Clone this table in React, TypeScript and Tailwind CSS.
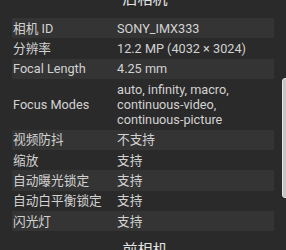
type Row = { label: string; value: string[] };

const BACK_CAMERA: Row[] = [
  { label: '相机 ID', value: ['SONY_IMX333'] },
  { label: '分辨率', value: ['12.2 MP (4032 × 3024)'] },
  { label: 'Focal Length', value: ['4.25 mm'] },
  { label: 'Focus Modes', value: ['auto, infinity, macro,', 'continuous-video,', 'continuous-picture'] },
  { label: '视频防抖', value: ['不支持'] },
  { label: '缩放', value: ['支持'] },
  { label: '自动曝光锁定', value: ['支持'] },
  { label: '自动白平衡锁定', value: ['支持'] },
  { label: '闪光灯', value: ['支持'] },
];

function SpecTable({ rows }: { rows: Row[] }) {
  return (
    <div className="flex flex-col">
      {rows.map((row, i) => (
        <div
          key={row.label}
          className={`flex items-center py-[2.7px] ${i % 2 === 0 ? 'bg-[#343434]' : ''}`}
        >
          <div className="w-[105px] shrink-0 pl-[1px]">{row.label}</div>
          <div className="flex flex-col">
            {row.value.map((line) => (
              <span key={line}>{line}</span>
            ))}
          </div>
        </div>
      ))}
    </div>
  );
}

export default function App() {
  return (
    <div
      className="relative h-[250px] w-[286px] overflow-hidden bg-[#2a2a2a] text-[12.7px] leading-[15px] text-[#d2d2d2]"
      style={{ fontFamily: 'Roboto, "Noto Sans CJK SC", sans-serif' }}
    >
      <div className="-mt-[12px] flex flex-col px-3">
        <h3 className="mb-2 pl-1 text-center text-[15px] leading-[22px] text-[#e4e4e4]">后相机</h3>
        <SpecTable rows={BACK_CAMERA} />
        <h3 className="mt-[8px] pl-1 text-center text-[15px] leading-[22px] text-[#e4e4e4]">前相机</h3>
      </div>

      {/* scroll thumb */}
      <div className="absolute left-[282px] top-[78px] h-[120px] w-[10px] rounded-[3px] border border-[#e6e6e6] bg-[#c4c4c4]" />
    </div>
  );
}
